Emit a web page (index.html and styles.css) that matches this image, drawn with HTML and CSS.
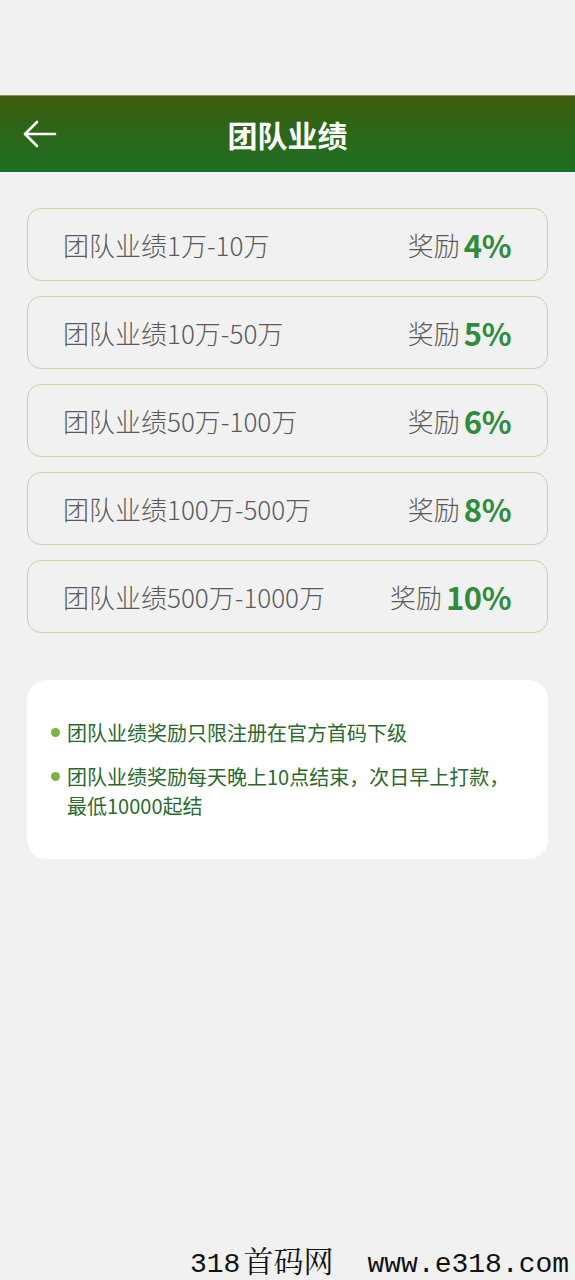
FILE: index.html
```html
<!DOCTYPE html>
<html lang="zh">
<head>
<meta charset="utf-8">
<link rel="stylesheet" href="styles.css">
</head>
<body>
<div class="page">
  <div class="status"></div>
  <header class="bar">
    <svg class="back" width="34" height="28" viewBox="0 0 34 28"><path d="M32 14H3M14 2L2 14l12 12" fill="none" stroke="#fff" stroke-width="2.6" stroke-linecap="round" stroke-linejoin="round"/></svg>
    <h1 class="title">团队业绩</h1>
  </header>
  <main class="list">
    <div class="card"><span class="range">团队业绩1万-10万</span><span class="reward">奖励<b class="pct">4%</b></span></div>
    <div class="card"><span class="range">团队业绩10万-50万</span><span class="reward">奖励<b class="pct">5%</b></span></div>
    <div class="card"><span class="range">团队业绩50万-100万</span><span class="reward">奖励<b class="pct">6%</b></span></div>
    <div class="card"><span class="range">团队业绩100万-500万</span><span class="reward">奖励<b class="pct">8%</b></span></div>
    <div class="card"><span class="range">团队业绩500万-1000万</span><span class="reward">奖励<b class="pct">10%</b></span></div>
  </main>
  <section class="notes">
    <p class="note">团队业绩奖励只限注册在官方首码下级</p>
    <p class="note">团队业绩奖励每天晚上10点结束，次日早上打款，最低10000起结</p>
  </section>
  <div class="spacer"></div>
  <div class="watermark"><span class="wm-a">318<span class="wm-cjk">首码网</span></span><span class="wm-b">www.e318.com</span></div>
</div>
</body>
</html>
```
FILE: styles.css
```css
* { box-sizing: border-box; margin: 0; padding: 0; }
html, body { background: #f1f1f1; }
body { font-family: "Noto Sans CJK SC", "Noto Sans", sans-serif; }
.page { width: 575px; height: 1280px; display: flex; flex-direction: column; overflow: hidden; }
.status { height: 95px; }
.bar {
  height: 77px;
  background: linear-gradient(180deg, #3e5c0c 0%, #2b6619 50%, #1f7023 100%);
  border-top: 1px solid #7a9a4a;
  display: flex; align-items: center; justify-content: center;
  position: relative;
}
.back { position: absolute; left: 23px; top: 24px; }
.title { color: #fff; font-size: 30px; font-weight: 700; line-height: 36px; }
.list { padding: 36px 27px 0 27px; display: flex; flex-direction: column; gap: 15px; }
.card {
  height: 73px;
  border: 1.3px solid #c4d5a6;
  border-radius: 14px;
  display: flex; align-items: center; justify-content: space-between;
  padding: 0 36px 0 35px;
}
.range { font-size: 26px; color: #5a5a5a; font-weight: 300; letter-spacing: 0; }
.reward { font-size: 26px; color: #5a5a5a; font-weight: 300; display: flex; align-items: center; gap: 4px; }
.pct { font-family: "Noto Sans CJK SC", sans-serif; font-size: 31px; font-weight: 700; color: #2f8c3d; letter-spacing: -0.5px; }
.notes {
  margin: 47px 27px 0 27px;
  height: 179px;
  background: #fff;
  border-radius: 20px;
  padding: 38px 28px 0 40px;
  display: flex; flex-direction: column; gap: 15px;
}
.note { position: relative; font-size: 20px; line-height: 29px; color: #2b6a2e; }
.note::before {
  content: ""; position: absolute; left: -16px; top: 10px;
  width: 9px; height: 9px; border-radius: 50%; background: #7cb342;
}
.spacer { flex: 1; }
.watermark {
  height: 38px; padding: 0 0 0 190px;
  font-family: "Liberation Mono", "Noto Serif CJK SC", monospace;
  font-size: 28px; color: #111; display: flex; gap: 34px; align-items: baseline;
}
.wm-a, .wm-b { line-height: 34px; white-space: nowrap; }
.wm-cjk { font-size: 30px; line-height: 34px; margin-left: 3px; font-family: "Noto Serif CJK SC", "Noto Sans CJK SC", serif; }
```
